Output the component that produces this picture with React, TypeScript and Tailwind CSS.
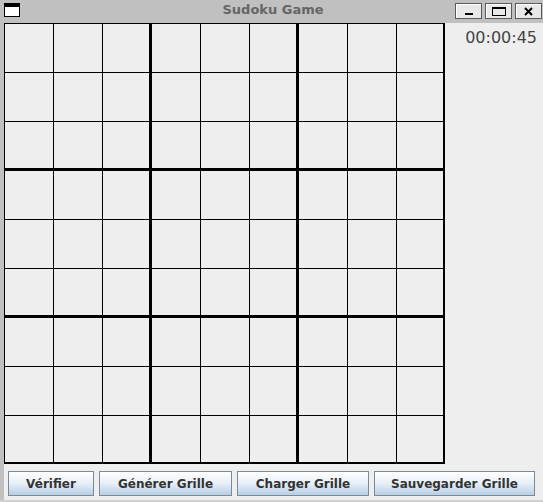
import React from "react";

const FONT = { fontFamily: '"DejaVu Sans", "Liberation Sans", sans-serif' };

function TitleButton({ children }: { children: React.ReactNode }) {
  return (
    <div className="w-[27px] h-[16px] border border-[#5a5a5a] bg-[#e8e8e8] shadow-[inset_1px_1px_0_#ffffff] flex items-center justify-center">
      {children}
    </div>
  );
}

function Btn({ label, w }: { label: string; w: string }) {
  return (
    <div
      className={`${w} h-[25px] border border-[#7a8a99] bg-linear-to-b from-[#ffffff] via-[#e6eef7] to-[#b8cfe5] flex items-center justify-center pt-[1px] text-[12px] font-bold text-[#333333]`}
    >
      {label}
    </div>
  );
}

export default function App() {
  const cells = [];
  for (let r = 0; r < 9; r++) {
    for (let c = 0; c < 9; c++) {
      cells.push(
        <div
          key={`${r}-${c}`}
          className={`w-[49px] h-[49px] bg-[#eeeeee] border-black border-t border-l ${
            r % 3 === 2 ? "border-b-2" : "border-b-0"
          } ${c % 3 === 2 ? "border-r-2" : "border-r-0"}`}
        />
      );
    }
  }

  return (
    <div className="w-[543px] h-[502px] bg-[#eeeeee] flex flex-col overflow-hidden" style={FONT}>
      {/* Title bar */}
      <div className="h-[23px] bg-[#c0c0c0] relative flex items-start shrink-0">
        <div className="ml-[4px] mt-[3px] w-[16px] h-[14px] border border-black bg-white border-t-[4px]" />
        <div className="absolute inset-x-0 top-[2px] pl-[3px] text-center text-[13px] font-bold text-[#666666] leading-[16px]">
          Sudoku Game
        </div>
        <div className="ml-auto mr-[1px] mt-[3px] flex gap-[3px]">
          <TitleButton>
            <div className="w-[8px] h-[2px] bg-black mt-[6px]" />
          </TitleButton>
          <TitleButton>
            <div className="w-[14px] h-[9px] border border-black border-t-2" />
          </TitleButton>
          <TitleButton>
            <svg width="9" height="9" viewBox="0 0 9 9">
              <path d="M1 1 L8 8 M8 1 L1 8" stroke="black" strokeWidth="2" />
            </svg>
          </TitleButton>
        </div>
      </div>

      {/* Body */}
      <div className="flex flex-1 min-h-0">
        <div className="w-[4px] bg-[#c0c0c0] shrink-0" />
        <div className="flex flex-col flex-1">
          <div className="flex">
            <div className="grid grid-cols-[repeat(9,49px)] grid-rows-[repeat(9,49px)] w-[442px]">
              {cells}
            </div>
            <div className="flex-1 pt-[5px] pr-[6px] text-right text-[16px] leading-[19px] text-[#444444]">
              00:00:45
            </div>
          </div>
          <div className="flex gap-[5px] pl-[4px] pt-[7px]">
            <Btn label="Vérifier" w="w-[86px]" />
            <Btn label="Générer Grille" w="w-[133px]" />
            <Btn label="Charger Grille" w="w-[132px]" />
            <Btn label="Sauvegarder Grille" w="w-[161px]" />
          </div>
        </div>
      </div>
      <div className="h-[2px] bg-[#d0d0d0] shrink-0" />
    </div>
  );
}
